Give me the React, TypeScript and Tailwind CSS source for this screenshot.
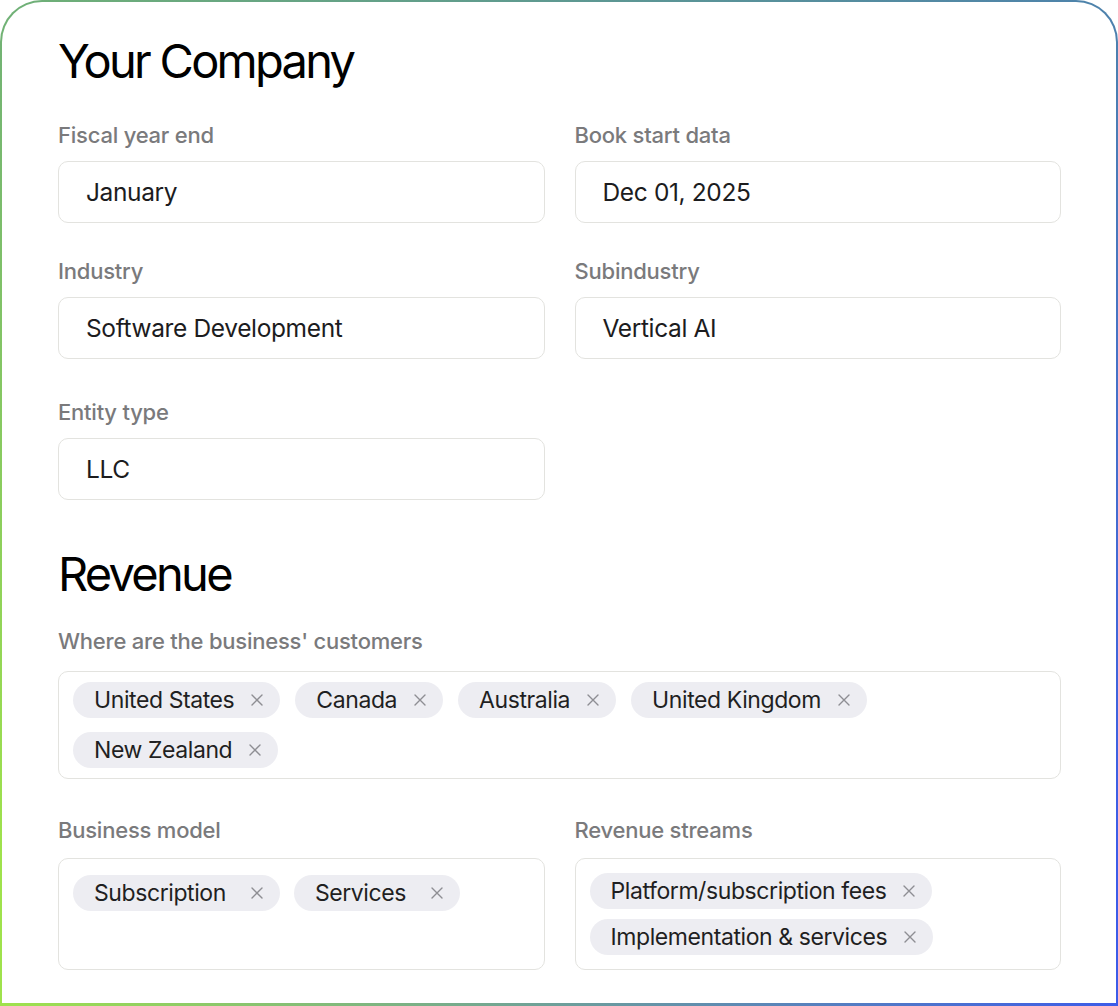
import React from "react";

// Company setup card: two-column form fields plus tag inputs for revenue details.

const font = { fontFamily: "Inter, 'Noto Sans', sans-serif" };

function XMark() {
  return (
    <svg width="12" height="12" viewBox="0 0 12 12" className="shrink-0">
      <path d="M1 1L11 11M11 1L1 11" stroke="#8e8e93" strokeWidth="1.4" strokeLinecap="round" />
    </svg>
  );
}

function Chip({ label, wide }: { label: string; wide?: boolean }) {
  return (
    <span
      className={`inline-flex h-9 items-center rounded-full bg-[#ededf2] pl-[21px] pr-[17px] text-[23px] leading-none tracking-[-0.018em] text-[#1f1f22] ${
        wide ? "gap-[25px]" : "gap-[17px]"
      }`}
    >
      {label}
      <XMark />
    </span>
  );
}

function Label({ children }: { children: React.ReactNode }) {
  return (
    <div className="text-[22px] font-medium leading-[28px] tracking-[-0.01em] text-[#7a7a7c]">{children}</div>
  );
}

function Field({ label, value }: { label: string; value: string }) {
  return (
    <div className="flex flex-col gap-[12px]">
      <Label>{label}</Label>
      <div className="flex h-[62px] items-center rounded-[10px] border-[1.5px] border-[#e3e3df] pl-[27px] text-[24.5px] tracking-[-0.015em] text-[#1c1c1e]">
        {value}
      </div>
    </div>
  );
}

export default function App() {
  return (
    <div className="h-[1006px] w-full overflow-hidden bg-white" style={font}>
      <div className="h-full rounded-t-[42px] bg-[linear-gradient(to_bottom,rgba(86,150,140,0.65),rgba(86,150,140,0)_85%),linear-gradient(to_right,#9fe24c,#3c5ce8)] px-[2px] pb-[3px] pt-[2px]">
        <div className="flex h-full flex-col rounded-t-[40px] bg-white pl-[56px] pr-[55px] pt-[30px]">
          <h1 className="text-[47px] font-normal leading-[58px] tracking-[-0.058em] text-black">Your Company</h1>

          <div className="mt-[31px] grid grid-cols-2 gap-x-[30px]">
            <Field label="Fiscal year end" value="January" />
            <Field label="Book start data" value="Dec 01, 2025" />
          </div>
          <div className="mt-[34px] grid grid-cols-2 gap-x-[30px]">
            <Field label="Industry" value="Software Development" />
            <Field label="Subindustry" value="Vertical AI" />
          </div>
          <div className="mt-[39px] grid grid-cols-2 gap-x-[30px]">
            <Field label="Entity type" value="LLC" />
          </div>

          <h2 className="mt-[45px] text-[47px] font-normal leading-[58px] tracking-[-0.058em] text-black">Revenue</h2>

          <div className="mt-[24px] flex flex-col gap-[16px]">
            <Label>Where are the business' customers</Label>
            <div className="flex flex-wrap gap-x-[15px] gap-y-[14px] rounded-[10px] border-[1.5px] border-[#e3e3df] px-[14px] py-[10px]">
              {["United States", "Canada", "Australia", "United Kingdom", "New Zealand"].map((c) => (
                <Chip key={c} label={c} />
              ))}
            </div>
          </div>

          <div className="mt-[37px] grid grid-cols-2 gap-x-[30px]">
            <div className="flex flex-col gap-[14px]">
              <Label>Business model</Label>
              <div className="flex flex-1 flex-wrap content-start gap-x-[14px] gap-y-[10px] rounded-[10px] border-[1.5px] border-[#e3e3df] px-[14px] pt-[16px]">
                <Chip label="Subscription" wide />
                <Chip label="Services" wide />
              </div>
            </div>
            <div className="flex flex-col gap-[14px]">
              <Label>Revenue streams</Label>
              <div className="flex flex-col items-start gap-[10px] rounded-[10px] border-[1.5px] border-[#e3e3df] px-[14px] py-[14px]">
                <Chip label="Platform/subscription fees" />
                <Chip label="Implementation & services" />
              </div>
            </div>
          </div>
        </div>
      </div>
    </div>
  );
}
